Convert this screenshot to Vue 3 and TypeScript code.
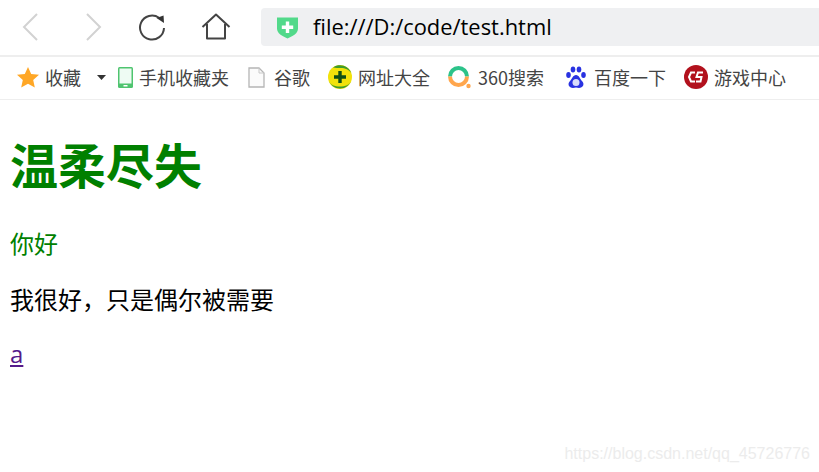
<script setup lang="ts">
</script>

<template>
  <div class="page">
    <header class="toolbar">
      <div class="nav">
        <button class="navbtn">
          <svg width="20" height="30" viewBox="0 0 20 30"><path d="M16 2 3 15l13 13" fill="none" stroke="#d2d2d2" stroke-width="2"/></svg>
        </button>
        <button class="navbtn">
          <svg width="20" height="30" viewBox="0 0 20 30"><path d="M4 2l13 13L4 28" fill="none" stroke="#d2d2d2" stroke-width="2"/></svg>
        </button>
        <button class="navbtn reload">
          <svg width="28" height="28" viewBox="0 0 28 28"><path d="M21 4.800A12 12 0 1 0 26 15" fill="none" stroke="#444" stroke-width="2"/><path d="M18.500 5 25.500 2.500 26 10z" fill="#333"/></svg>
        </button>
        <button class="navbtn home">
          <svg width="30" height="28" viewBox="0 0 30 28"><path d="M1.500 14 15 1.500 28.500 14M6 11v14.500h18V11" fill="none" stroke="#444" stroke-width="2" stroke-linejoin="round"/></svg>
        </button>
      </div>
      <div class="address">
        <svg class="shield" width="21" height="24" viewBox="0 0 21 24"><path d="M0 2.500h21v11c0 5-5 7.500-10.500 10C5 21 0 18.500 0 13.500z" fill="#52d98a"/><path d="M8.800 6.500h3.400v4h4v3.400h-4v4H8.800v-4h-4v-3.400h4z" fill="#fff"/></svg>
        <span class="url">file:///D:/code/test.html</span>
      </div>
    </header>

    <nav class="bookmarks">
      <div class="bm fav">
        <svg width="22" height="21" viewBox="0 0 22 21"><path d="M11 0l3.200 7 7.800.8-5.800 5.200 1.600 7.600L11 16.800 4.200 20.600l1.600-7.600L0 7.800 7.800 7z" fill="#ffa726"/></svg>
        <span>收藏</span>
        <svg class="caret" width="9" height="5" viewBox="0 0 9 5"><path d="M0 0h9L4.500 5z" fill="#333"/></svg>
      </div>
      <div class="bm phone">
        <svg width="15" height="21" viewBox="0 0 15 21"><rect width="15" height="21" rx="1.500" fill="#4fc46f"/><rect x="1.500" y="1.500" width="12" height="15" fill="#eefbf3"/><rect x="5.500" y="18" width="4" height="1.500" fill="#fff"/></svg>
        <span>手机收藏夹</span>
      </div>
      <div class="bm doc">
        <svg width="17" height="21" viewBox="0 0 17 21"><path d="M1 1h10l5 5v14H1z" fill="#fbfbfb" stroke="#b5b5b5" stroke-width="1.300"/><path d="M11 1v5h5" fill="none" stroke="#c8c8c8"/></svg>
        <span>谷歌</span>
      </div>
      <div class="bm web">
        <svg width="24" height="24" viewBox="0 0 24 24"><circle cx="12" cy="12" r="12" fill="#f2e20a"/><path d="M.500 15a12 12 0 0 0 23 0c-2 5-6 6.500-11.500 6.500S2.500 20 .500 15z" fill="#3f9b2c"/><path d="M5 2.500a12 12 0 0 1 18.500 6C21 4.500 17 3 13 3c-3 0-5.500 0-8-.5z" fill="#3f9b2c"/><path d="M10.300 6h3.400v4.300H18v3.400h-4.300V18h-3.400v-4.300H6v-3.400h4.300z" fill="#0f4f16"/></svg>
        <span>网址大全</span>
      </div>
      <div class="bm so">
        <svg width="23" height="23" viewBox="0 0 23 23"><path d="M2 10.500a8.500 8.500 0 0 1 17 0" fill="none" stroke="#2cc38a" stroke-width="4"/><path d="M2 10.500a8.500 8.500 0 0 0 17 0" fill="none" stroke="#ffa64d" stroke-width="4"/><circle cx="20.500" cy="20" r="2.200" fill="#ffa64d"/></svg>
        <span>360搜索</span>
      </div>
      <div class="bm baidu">
        <svg width="20" height="23" viewBox="0 0 20 23"><g fill="#2932e1"><ellipse cx="2.500" cy="9" rx="2.300" ry="3"/><ellipse cx="7" cy="3.500" rx="2.300" ry="3"/><ellipse cx="13" cy="3.500" rx="2.300" ry="3"/><ellipse cx="17.500" cy="9" rx="2.300" ry="3"/><path d="M10 9c3 0 4 4 6 6 3 3 1 7-3 7-1 0-2-.5-3-.5s-2 .5-3 .5c-4 0-6-4-3-7 2-2 3-6 6-6z"/></g><circle cx="10" cy="16.500" r="3.500" fill="#d9dcfb"/></svg>
        <span>百度一下</span>
      </div>
      <div class="bm game">
        <svg width="24" height="24" viewBox="0 0 24 24"><circle cx="12" cy="12" r="12" fill="#b2111d"/><path d="M11 7.500H7L5 12l2 4.500h4M19 7.500h-5l-1.500 4.500h5l-1 4.500H12" fill="none" stroke="#fff" stroke-width="2"/></svg>
        <span>游戏中心</span>
      </div>
    </nav>

    <main class="content">
      <h1>温柔尽失</h1>
      <p class="green">你好</p>
      <p>我很好，只是偶尔被需要</p>
      <p class="link"><a href="#">a</a></p>
    </main>

    <div class="watermark">https://blog.csdn.net/qq_45726776</div>
  </div>
</template>

<style>
html, body { margin: 0; background: #fff; }
</style>

<style scoped>
.page {
  position: relative;
  width: 819px;
  height: 472px;
  overflow: hidden;
  background: #fff;
  font-family: "Noto Sans CJK SC", "Noto Sans", sans-serif;
}
.toolbar {
  display: flex;
  align-items: center;
  height: 57px;
  box-sizing: border-box;
  border-bottom: 2px solid #eeeeee;
  padding-bottom: 2px;
}
.nav { display: flex; align-items: center; }
.navbtn {
  width: 62px;
  height: 40px;
  padding: 0;
  border: 0;
  background: none;
  display: flex;
  align-items: center;
  justify-content: center;
}
.reload { width: 56px; }
.home { width: 72px; }
.address {
  flex: 1;
  display: flex;
  align-items: center;
  height: 38px;
  margin-left: 9px;
  padding-left: 16px;
  background: #eff0f2;
  border-radius: 4px 0 0 4px;
}
.shield { margin-right: 15px; }
.url {
  font-family: "Open Sans", sans-serif;
  font-size: 21.900px;
  color: #000;
}
.bookmarks {
  display: flex;
  align-items: center;
  height: 43px;
  box-sizing: border-box;
  border-bottom: 1px solid #eeeeee;
  padding-left: 17px;
  padding-bottom: 2px;
  font-size: 18px;
  color: #444;
  white-space: nowrap;
}
.bm { display: flex; align-items: center; gap: 7px; }
.fav { gap: 6px; margin-right: 12px; }
.caret { margin-left: 10px; }
.phone { gap: 6px; margin-right: 19px; }
.doc { gap: 9px; margin-right: 18px; }
.web { gap: 6px; margin-right: 18px; }
.so { gap: 7px; margin-right: 22px; }
.baidu { gap: 8px; margin-right: 18px; }
.game { gap: 6px; }
.content { padding: 31px 10px 0; }
h1 {
  margin: 0 0 32px;
  font-size: 48px;
  line-height: 64px;
  font-weight: 700;
  color: #008000;
}
p {
  margin: 0 0 24px;
  font-size: 24px;
  line-height: 32px;
  color: #000;
}
.green { color: #008000; }
.link { margin-top: -2px; }
a { color: #551a8b; text-decoration: underline; font-family: "Open Sans", sans-serif; }
.watermark {
  position: absolute;
  right: 9px;
  bottom: 9px;
  font-family: "Liberation Sans", sans-serif;
  font-size: 16px;
  color: #ececec;
}
</style>
